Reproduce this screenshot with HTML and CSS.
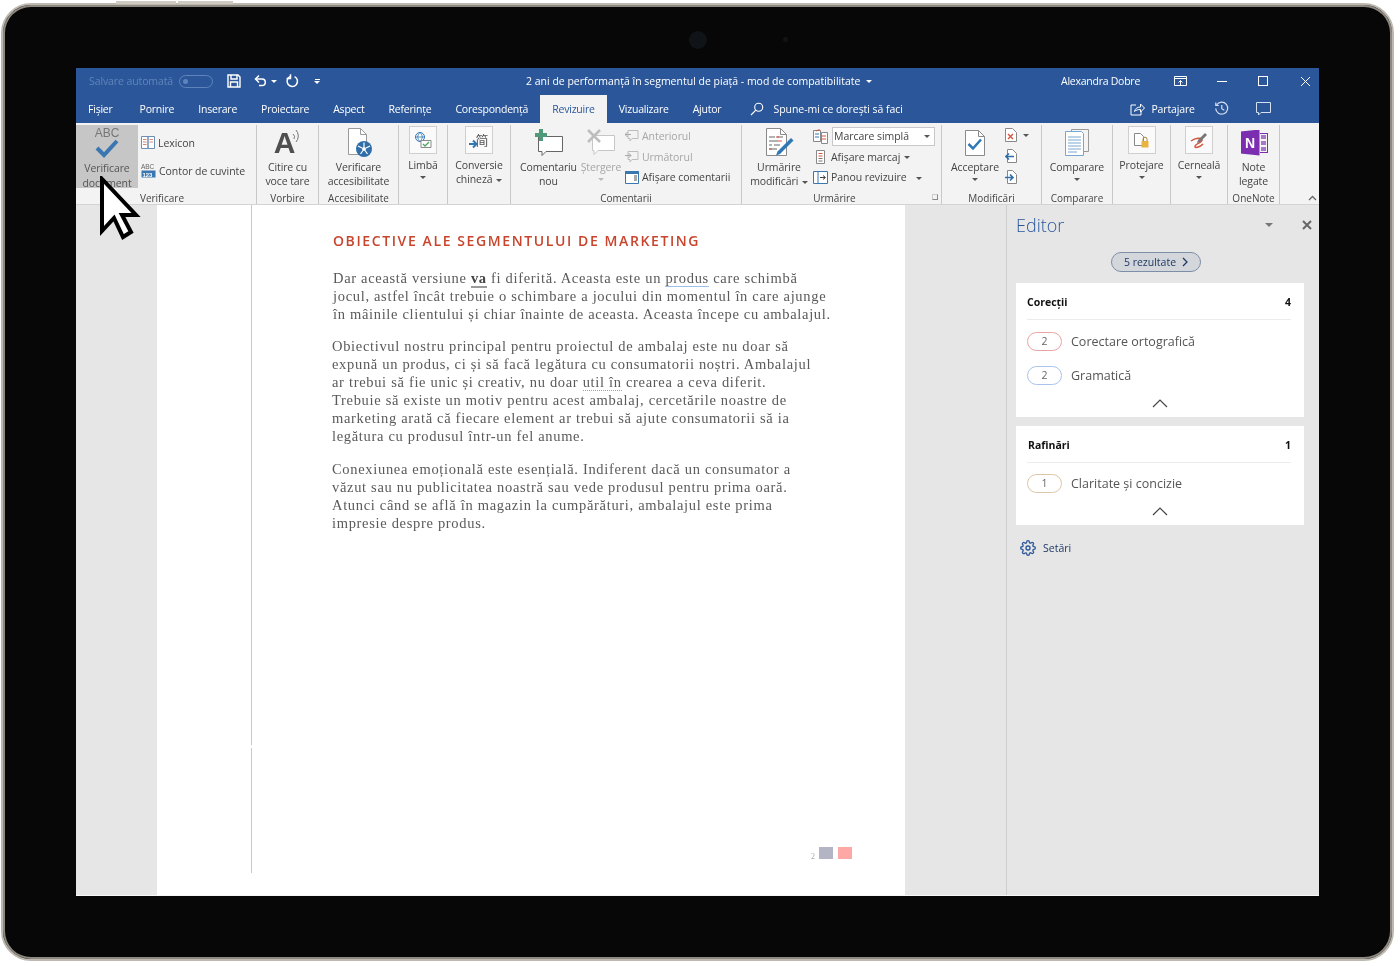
FILE: index.html
```html
<!DOCTYPE html>
<html lang="ro">
<head>
    <meta charset="UTF-8">
    <meta name="viewport" content="width=device-width, initial-scale=1.0">
    <title>Editor - Word</title>
    <link rel="stylesheet" href="styles.css">
</head>
<body>
<div class="device">
    <span class="hw-btn hw-btn-a"></span>
    <span class="hw-btn hw-btn-b"></span>
    <span class="camera"></span>
    <span class="sensor"></span>

    <div class="screen">
        <!-- title bar -->
        <div class="titlebar">
            <span class="autosave">Salvare automată</span>
            <span class="toggle"><i></i></span>
            <svg class="qa-save" width="14" height="14" viewBox="0 0 14 14" fill="none" stroke="#fff" stroke-width="1.4"><path d="M1 1h10l2 2v10H1z"/><path d="M4 1v4h6V1M3.5 13V8h7v5"/></svg>
            <svg class="qa-undo" width="14" height="14" viewBox="0 0 14 14" fill="none" stroke="#fff" stroke-width="1.5"><path d="M1.5 5H8a3.3 3.3 0 0 1 0 6.6H5"/><path d="M5 1.5 1.5 5 5 8.5"/></svg>
            <span class="caret caret-white qa-undo-caret"></span>
            <svg class="qa-redo" width="14" height="14" viewBox="0 0 14 14" fill="none" stroke="#fff" stroke-width="1.5"><path d="M9.6 2.6a5.2 5.2 0 1 1-4.2-.2"/><path d="M5.5 .2v4.2H1.6"/></svg>
            <span class="qa-more"><i></i><span class="caret caret-white"></span></span>
            <span class="doc-title">2 ani de performanță în segmentul de piață - mod de compatibilitate</span>
            <span class="caret caret-white title-caret"></span>
            <span class="user">Alexandra Dobre</span>
            <svg class="win-display" width="13" height="11" viewBox="0 0 13 11" fill="none" stroke="#fff"><path d="M.5.5h12v9H.5zM.5 2.5h12"/><path d="M6.5 9V4.5M4.5 6.5l2-2 2 2"/></svg>
            <span class="win-min"></span>
            <span class="win-max"></span>
            <svg class="win-close" width="11" height="11" viewBox="0 0 11 11" stroke="#fff"><path d="M1 1l9 9M10 1l-9 9"/></svg>
        </div>

        <!-- tabs -->
        <div class="tabs">
            <span class="tab tab-first">Fișier</span>
            <span class="tab">Pornire</span>
            <span class="tab">Inserare</span>
            <span class="tab">Proiectare</span>
            <span class="tab">Aspect</span>
            <span class="tab">Referințe</span>
            <span class="tab">Corespondență</span>
            <span class="tab tab-active">Revizuire</span>
            <span class="tab">Vizualizare</span>
            <span class="tab">Ajutor</span>
            <svg class="tell-icon" width="14" height="14" viewBox="0 0 14 14" fill="none" stroke="#fff" stroke-width="1.1"><circle cx="8.7" cy="5.3" r="4"/><path d="M5.8 8.2 1 13"/></svg>
            <span class="tell">Spune-mi ce dorești să faci</span>
            <svg class="share-icon" width="15" height="14" viewBox="0 0 15 14" fill="none" stroke="#fff"><path d="M6 3H1v10h10V9"/><path d="M4.5 9.5C5 6.5 7.5 5 10.5 5V2L14.5 6l-4 4V7.5C8 7.5 6 8 4.5 9.5z"/></svg>
            <span class="share">Partajare</span>
            <svg class="history-icon" width="15" height="15" viewBox="0 0 15 15" fill="none" stroke="#d5e0f0" stroke-width="1.2"><path d="M2.6 4a6 6 0 1 1-.9 3.5"/><path d="M1.8 1.5v3h3M7.8 4v3.700l2.500 1.500"/></svg>
            <svg class="comment-icon" width="15" height="14" viewBox="0 0 15 14" fill="none" stroke="#d5e0f0"><path d="M.5.5h14v10H5L2.500 13v-2.500h-2z"/></svg>
        </div>

        <!-- ribbon -->
        <div class="ribbon">
            <section class="group g-proof">
                <div class="group-body">
                    <div class="big big-active">
                        <span class="abc">ABC</span>
                        <svg class="abc-check" width="24" height="19" viewBox="0 0 24 19" fill="none" stroke="#3a76b0" stroke-width="4"><path d="M2 9l7 7L22 2"/></svg>
                        <span class="big-text">Verificare<br>document</span>
                    </div>
                    <div class="stack stack-proof">
                        <div class="line">
                            <svg width="14" height="13" viewBox="0 0 14 13" fill="#fff" stroke="#6d8fb5"><path d="M.5.5H7v12H.5zM7 .5h6.500v12H7z"/><path d="M2 3.500h3.500M2 6h3.500M2 8.500h3.500M8.500 3.500H12M8.500 6H12" stroke="#d08a7a"/></svg>
                            <span>Lexicon</span>
                        </div>
                        <div class="line">
                            <svg width="15" height="15" viewBox="0 0 15 15"><text x="0" y="6" class="tiny-abc">ABC</text><rect x=".5" y="7.5" width="14" height="7" fill="#3a76b0"/><text x="1.5" y="13.5" class="tiny-num">123</text></svg>
                            <span>Contor de cuvinte</span>
                        </div>
                    </div>
                </div>
                <div class="group-label label-proof">Verificare</div>
            </section>

            <section class="group g-speech">
                <div class="group-body center">
                    <div class="big">
                        <span class="big-icon icon-a">
                            <span class="big-a">A</span>
                            <svg width="9" height="18" viewBox="0 0 9 18" fill="none" stroke="#777"><path d="M1 6a4 4 0 0 1 1 5M4 2a9 9 0 0 1 0 12"/></svg>
                        </span>
                        <span class="big-text">Citire cu<br>voce tare</span>
                    </div>
                </div>
                <div class="group-label">Vorbire</div>
            </section>

            <section class="group g-access">
                <div class="group-body center">
                    <div class="big">
                        <span class="big-icon icon-access">
                            <svg width="26" height="31" viewBox="0 0 26 31"><path d="M1.5 1.5h12l6 6v20h-18z" fill="#fff" stroke="#9a9a9a"/><path d="M13.5 1.5v6h6" fill="none" stroke="#9a9a9a"/><circle cx="17" cy="22" r="8" fill="#2f6ea8"/><circle cx="17" cy="22" r="2" fill="#fff"/><path d="M17 15.500V20M11 19l4 2M23 19l-4 2M13.500 27l2.500-3.500M20.500 27 18 23.500" stroke="#fff" stroke-width="1.2"/></svg>
                        </span>
                        <span class="big-text">Verificare<br>accesibilitate</span>
                    </div>
                </div>
                <div class="group-label">Accesibilitate</div>
            </section>

            <section class="group g-lang">
                <div class="group-body center">
                    <div class="big">
                        <span class="boxed">
                            <svg width="18" height="16" viewBox="0 0 18 16"><circle cx="6" cy="5" r="4.5" fill="none" stroke="#2f78b5"/><path d="M1.5 5h9M6 .5c-3 3-3 6 0 9M6 .5c3 3 3 6 0 9" fill="none" stroke="#2f78b5" stroke-width=".8"/><path d="M7 8.5h10v7H7z" fill="#fff" stroke="#8a8a8a"/><path d="M9 12l2 2 4-4" fill="none" stroke="#4aa564" stroke-width="1.3"/></svg>
                        </span>
                        <span class="big-text">Limbă</span>
                        <span class="caret"></span>
                    </div>
                </div>
            </section>

            <section class="group g-chinese">
                <div class="group-body center">
                    <div class="big">
                        <span class="boxed boxed-ch">
                            <svg width="9" height="10" viewBox="0 0 9 10" fill="none" stroke="#2f78b5" stroke-width="2" class="ch-arrow"><path d="M0 5h7M4 1.5 7.500 5 4 8.500"/></svg>
                            <span class="ch-glyph">简</span>
                        </span>
                        <span class="big-text">Conversie<br>chineză <span class="caret caret-inline"></span></span>
                    </div>
                </div>
            </section>

            <section class="group g-comments">
                <div class="group-body">
                    <div class="big big-new">
                        <span class="big-icon">
                            <svg width="30" height="28" viewBox="0 0 30 28"><path d="M4.5 7.5h24v15H12l-4 4v-4H4.500z" fill="#fff" stroke="#666"/><path d="M3 0h4v4h4v4H7v4H3V8h-4V4h4z" transform="translate(2 0)" fill="#4e9a7a"/></svg>
                        </span>
                        <span class="big-text">Comentariu<br>nou</span>
                    </div>
                    <div class="big big-del disabled">
                        <span class="big-icon">
                            <svg width="28" height="28" viewBox="0 0 28 28"><path d="M5.5 6.5h22v15H11l-4 4v-4H5.500z" fill="#fff" stroke="#c6c6c6"/><path d="M1 1l12 12M13 1 1 13" stroke="#bdbdbd" stroke-width="2.5"/></svg>
                        </span>
                        <span class="big-text">Ștergere</span>
                        <span class="caret caret-off"></span>
                    </div>
                    <div class="stack stack-comments">
                        <div class="line disabled">
                            <svg width="14" height="14" viewBox="0 0 14 14" fill="none" stroke="#bdbdbd"><path d="M3 1.5h10v8H7L5 12V9.500H3z"/><path d="M0 5.500h6M2.500 3 0 5.500 2.500 8" stroke="#a9a9a9"/></svg>
                            <span>Anteriorul</span>
                        </div>
                        <div class="line disabled">
                            <svg width="14" height="14" viewBox="0 0 14 14" fill="none" stroke="#bdbdbd"><path d="M3 1.5h10v8H7L5 12V9.500H3z"/><path d="M0 5.500h6M3.500 3 6 5.500 3.500 8" stroke="#a9a9a9"/></svg>
                            <span>Următorul</span>
                        </div>
                        <div class="line">
                            <svg width="14" height="13" viewBox="0 0 14 13"><path d="M.5.5h13v12H.5z" fill="#fff" stroke="#3a76b0"/><path d="M.5.5h13v2H.5z" fill="#3a76b0" stroke="#3a76b0"/><path d="M9 5h3M9 7h3M9 9h3" stroke="#555"/></svg>
                            <span>Afișare comentarii</span>
                        </div>
                    </div>
                </div>
                <div class="group-label">Comentarii</div>
            </section>

            <section class="group g-track">
                <div class="group-body">
                    <div class="big big-track">
                        <span class="big-icon">
                            <svg width="30" height="32" viewBox="0 0 30 32"><path d="M2.5 1.5h14l6 6v21h-20z" fill="#fff" stroke="#8a8a8a"/><path d="M16.5 1.5v6h6" fill="none" stroke="#8a8a8a"/><path d="M5 10h6M13 10h6M5 14h9M5 18h3M10 18h6M5 22h8" stroke="#666"/><path d="M12 10h3M14 14h4M5 22h3" stroke="#d2553f"/><path d="M27 11l2.5 2.500L16 27l-4 1.500 1.500-4z" fill="#2f78b5"/></svg>
                        </span>
                        <span class="big-text">Urmărire<br>modificări <span class="caret caret-inline"></span></span>
                    </div>
                    <div class="stack stack-track">
                        <div class="line line-select">
                            <svg width="15" height="15" viewBox="0 0 15 15" fill="#fff" stroke="#888"><path d="M.5 1.5h7v11h-7z"/><path d="M8.5 3.5h6v11h-6z"/><path d="M3 2 6.500.5M9 7h4M9 10h4" stroke="#d2553f"/><path d="M2 5h4M2 8h4" stroke="#2f78b5"/></svg>
                            <span class="select">Marcare simplă<span class="caret"></span></span>
                        </div>
                        <div class="line">
                            <svg width="15" height="14" viewBox="0 0 15 14" fill="#fff" stroke="#888"><path d="M3.5.5h8v13h-8z"/><path d="M5.5 3.500h4M5.500 6h4" stroke="#d2553f"/><path d="M5.5 8.500h4M5.500 11h4" stroke="#777"/></svg>
                            <span>Afișare marcaj <span class="caret caret-inline"></span></span>
                        </div>
                        <div class="line">
                            <svg width="15" height="13" viewBox="0 0 15 13"><path d="M.5.5h14v12H.5z" fill="#fff" stroke="#3a76b0"/><path d="M5 .5v12" stroke="#3a76b0"/><path d="M7 6.500h5M10 4.500l2.500 2-2.500 2" fill="none" stroke="#444"/></svg>
                            <span>Panou revizuire <span class="caret caret-inline caret-gap"></span></span>
                        </div>
                    </div>
                </div>
                <div class="group-label label-track">Urmărire<span class="launcher"></span></div>
            </section>

            <section class="group g-changes">
                <div class="group-body">
                    <div class="big big-accept">
                        <span class="big-icon">
                            <svg width="22" height="28" viewBox="0 0 22 28"><path d="M1.5 1.5h13l6 6v19h-19z" fill="#fff" stroke="#8a8a8a"/><path d="M14.5 1.5v6h6" fill="none" stroke="#8a8a8a"/><path d="M4.5 15l4.500 4.500 8-9" fill="none" stroke="#2f78b5" stroke-width="2.5"/></svg>
                        </span>
                        <span class="big-text">Acceptare</span>
                        <span class="caret"></span>
                    </div>
                    <div class="mini-stack">
                        <div class="mini-row">
                            <svg width="12" height="14" viewBox="0 0 12 14"><path d="M.5.5h7l4 4v9H.5z" fill="#fff" stroke="#888"/><path d="M3 6l5 5M8 6l-5 5" stroke="#d2553f" stroke-width="1.4"/></svg>
                            <span class="caret mini-caret"></span>
                        </div>
                        <svg width="12" height="14" viewBox="0 0 12 14"><path d="M2.5.5h5l4 4v9h-9z" fill="#fff" stroke="#888"/><path d="M9 7.500H1M4 4.500l-3 3 3 3" fill="none" stroke="#2f6ea8" stroke-width="1.6"/></svg>
                        <svg width="12" height="14" viewBox="0 0 12 14"><path d="M2.5.5h5l4 4v9h-9z" fill="#fff" stroke="#888"/><path d="M0 7.500h8M5 4.500l3 3-3 3" fill="none" stroke="#2f6ea8" stroke-width="1.6"/></svg>
                    </div>
                </div>
                <div class="group-label">Modificări</div>
            </section>

            <section class="group g-compare">
                <div class="group-body center">
                    <div class="big">
                        <span class="big-icon">
                            <svg width="24" height="27" viewBox="0 0 24 27"><path d="M6.5.5h17v22h-17z" fill="#f4f4f4" stroke="#999"/><path d="M.5 2.500h16l2 2v22H.5z" fill="#fff" stroke="#7ba6d0"/><path d="M3 8h13M3 11h13M3 14h13M3 17h13M3 20h13M3 23h9" stroke="#7ba6d0"/></svg>
                        </span>
                        <span class="big-text">Comparare</span>
                        <span class="caret"></span>
                    </div>
                </div>
                <div class="group-label">Comparare</div>
            </section>

            <section class="group g-protect">
                <div class="group-body center">
                    <div class="big">
                        <span class="boxed">
                            <svg width="15" height="15" viewBox="0 0 15 15"><path d="M.5.5h6l3 3v9h-9z" fill="#fff" stroke="#888"/><rect x="7.5" y="8" width="7" height="6.500" fill="#e8b341"/><path d="M9 8V6.200a2 2 0 0 1 4 0V8" fill="none" stroke="#a78a3f"/></svg>
                        </span>
                        <span class="big-text">Protejare</span>
                        <span class="caret"></span>
                    </div>
                </div>
            </section>

            <section class="group g-ink">
                <div class="group-body center">
                    <div class="big">
                        <span class="boxed">
                            <svg width="18" height="17" viewBox="0 0 18 17" fill="none"><path d="M1 9c4-3 11-4 11-1s-8 4-7 7c1 1 5 0 8-3" stroke="#d2553f" stroke-width="1.5"/><path d="M15 1l2 2-7 7-3 1 1-3z" fill="#777"/></svg>
                        </span>
                        <span class="big-text">Cerneală</span>
                        <span class="caret"></span>
                    </div>
                </div>
            </section>

            <section class="group g-onenote">
                <div class="group-body center">
                    <div class="big">
                        <span class="big-icon icon-onenote">
                            <span class="on-tile">N</span>
                            <span class="on-tabs"><i></i><i></i><i></i></span>
                        </span>
                        <span class="big-text">Note<br>legate</span>
                    </div>
                </div>
                <div class="group-label">OneNote</div>
            </section>

            <section class="g-collapse">
                <svg width="9" height="6" viewBox="0 0 9 6" fill="none" stroke="#666" stroke-width="1.3"><path d="M1 5l3.500-3.500L8 5"/></svg>
            </section>
        </div>

        <!-- document + pane -->
        <div class="workspace">
            <div class="gutter"></div>
            <div class="doc">
                <div class="sheet">
                    <h1 class="doc-heading">OBIECTIVE ALE SEGMENTULUI DE MARKETING</h1>
                    <p class="para para-first">Dar această versiune <b class="err-bold">va</b> fi diferită. Aceasta este un <span class="err-blue">produs</span> care schimbă<br>jocul, astfel încât trebuie o schimbare a jocului din momentul în care ajunge<br>în mâinile clientului și chiar înainte de aceasta. Aceasta începe cu ambalajul.</p>
                    <p class="para">Obiectivul nostru principal pentru proiectul de ambalaj este nu doar să<br>expună un produs, ci și să facă legătura cu consumatorii noștri. Ambalajul<br>ar trebui să fie unic și creativ, nu doar <span class="err-gold">util în</span> crearea a ceva diferit.<br>Trebuie să existe un motiv pentru acest ambalaj, cercetările noastre de<br>marketing arată că fiecare element ar trebui să ajute consumatorii să ia<br>legătura cu produsul într-un fel anume.</p>
                    <p class="para">Conexiunea emoțională este esențială. Indiferent dacă un consumator a<br>văzut sau nu publicitatea noastră sau vede produsul pentru prima oară.<br>Atunci când se află în magazin la cumpărături, ambalajul este prima<br>impresie despre produs.</p>
                    <div class="page-foot">
                        <span class="page-num">2</span>
                        <span class="sq sq-grey"></span>
                        <span class="sq sq-pink"></span>
                    </div>
                </div>
            </div>
            <div class="margin-right"></div>

            <aside class="pane">
                <div class="pane-head">
                    <span class="pane-title">Editor</span>
                    <span class="caret caret-pane"></span>
                    <svg class="pane-x" width="10" height="10" viewBox="0 0 10 10" stroke="#666" stroke-width="2"><path d="M1 1l8 8M9 1 1 9"/></svg>
                </div>
                <div class="pill-row">
                    <span class="results">5 rezultate
                        <svg width="6" height="10" viewBox="0 0 6 10" fill="none" stroke="#1f3864" stroke-width="1.3"><path d="M1 1l4 4-4 4"/></svg>
                    </span>
                </div>

                <div class="card card-fix">
                    <div class="card-head"><span>Corecții</span><span>4</span></div>
                    <div class="row"><span class="count count-red">2</span>Corectare ortografică</div>
                    <div class="row"><span class="count count-blue">2</span>Gramatică</div>
                    <div class="card-chev">
                        <svg width="16" height="9" viewBox="0 0 16 9" fill="none" stroke="#444" stroke-width="1.2"><path d="M1 8l7-7 7 7"/></svg>
                    </div>
                </div>

                <div class="card card-refine">
                    <div class="card-head"><span class="refine-name">Rafinări</span><span>1</span></div>
                    <div class="row"><span class="count count-tan">1</span>Claritate și concizie</div>
                    <div class="card-chev">
                        <svg width="16" height="9" viewBox="0 0 16 9" fill="none" stroke="#444" stroke-width="1.2"><path d="M1 8l7-7 7 7"/></svg>
                    </div>
                </div>

                <div class="settings">
                    <svg width="16" height="16" viewBox="0 0 24 24" fill="none" stroke="#2b579a" stroke-width="2"><path d="M12 15a3 3 0 1 0 0-6 3 3 0 0 0 0 6z"/><path d="M19.4 15a1.65 1.65 0 0 0 .33 1.82l.06.06a2 2 0 0 1-2.83 2.83l-.06-.06a1.65 1.65 0 0 0-1.82-.33 1.65 1.65 0 0 0-1 1.51V21a2 2 0 0 1-4 0v-.09A1.65 1.65 0 0 0 9 19.4a1.65 1.65 0 0 0-1.82.33l-.06.06a2 2 0 0 1-2.83-2.83l.06-.06a1.65 1.65 0 0 0 .33-1.82 1.65 1.65 0 0 0-1.51-1H3a2 2 0 0 1 0-4h.09A1.65 1.65 0 0 0 4.6 9a1.65 1.65 0 0 0-.33-1.82l-.06-.06a2 2 0 0 1 2.83-2.83l.06.06a1.65 1.65 0 0 0 1.82.33H9a1.65 1.65 0 0 0 1-1.51V3a2 2 0 0 1 4 0v.09a1.65 1.65 0 0 0 1 1.51 1.65 1.65 0 0 0 1.82-.33l.06-.06a2 2 0 0 1 2.83 2.83l-.06.06a1.65 1.65 0 0 0-.33 1.82V9a1.65 1.65 0 0 0 1.51 1H21a2 2 0 0 1 0 4h-.09a1.65 1.65 0 0 0-1.51 1z"/></svg>
                    <span>Setări</span>
                </div>
            </aside>
        </div>
    </div>
</div>

<!-- mouse pointer over the ribbon -->
<svg class="pointer" width="42" height="64" viewBox="0 0 42 64"><path d="M3 3v52l12-13 9 19 8-5-9-17h14z" fill="#fff" stroke="#000" stroke-width="4" stroke-linejoin="miter"/></svg>
</body>
</html>
```

FILE: styles.css
```css
* {
    box-sizing: border-box;
}
body {
    margin: 0;
    background: #fff;
    font-family: "Open Sans", "Noto Sans", sans-serif;
    font-size: 10.5px;
    color: #444;
    overflow: hidden;
    height: 966px;
    position: relative;
}

/* tablet frame */
.device {
    position: relative;
    width: 1393px;
    height: 958px;
    margin: 3px 0 0 1px;
    padding: 63px 0 0 73px;
    background: #070707;
    border: 2px solid #bdb9b0;
    border-radius: 30px;
    box-shadow: inset 0 0 0 2px #8d8880;
}
.hw-btn {
    position: absolute;
    top: -4px;
    height: 3px;
    background: #cfcbc2;
}
.hw-btn-a { left: 113px; width: 60px; }
.hw-btn-b { left: 175px; width: 55px; }
.camera {
    position: absolute;
    top: 26px;
    left: 686px;
    width: 18px;
    height: 18px;
    border-radius: 50%;
    background: #101418;
}
.sensor {
    position: absolute;
    top: 32px;
    left: 780px;
    width: 5px;
    height: 5px;
    border-radius: 50%;
    background: #131313;
}
.screen {
    width: 1243px;
    height: 828px;
    display: flex;
    flex-direction: column;
    background: #e6e6e6;
    filter: blur(.35px);
}

/* carets */
.caret {
    display: inline-block;
    width: 0;
    height: 0;
    border-left: 3px solid transparent;
    border-right: 3px solid transparent;
    border-top: 3px solid #555;
}
.caret-white { border-top-color: #fff; }
.caret-off { border-top-color: #bbb; }
.caret-inline {
    vertical-align: middle;
    margin-left: 1px;
}

/* title bar */
.titlebar {
    height: 27px;
    flex: none;
    display: flex;
    align-items: center;
    background: #2b579a;
    color: #fff;
    padding: 0 0 1px 13px;
}
.autosave {
    width: 90px;
    letter-spacing: -.1px;
    color: #5f84ba;
    white-space: nowrap;
}
.toggle {
    width: 34px;
    height: 13px;
    border: 1px solid #5f84ba;
    border-radius: 7px;
    display: flex;
    align-items: center;
    padding-left: 3px;
}
.toggle i {
    width: 5px;
    height: 5px;
    border-radius: 50%;
    background: #5f84ba;
}
.qa-save { margin-left: 14px; }
.qa-undo { margin-left: 13px; }
.qa-undo-caret { margin-left: 3px; }
.qa-redo { margin-left: 8px; }
.qa-more {
    margin-left: 15px;
    display: flex;
    flex-direction: column;
    align-items: center;
    gap: 1px;
    width: 6px;
}
.qa-more i {
    width: 5px;
    height: 1px;
    background: #fff;
}
.doc-title {
    margin-left: 206px;
    width: 335px;
    white-space: nowrap;
}
.title-caret { margin-left: 5px; }
.user {
    margin-left: 189px;
    width: 80px;
    white-space: nowrap;
    letter-spacing: -.25px;
}
.win-display { margin-left: 33px; }
.win-min {
    width: 10px;
    height: 1px;
    margin-left: 30px;
    background: #fff;
}
.win-max {
    width: 10px;
    height: 10px;
    margin-left: 31px;
    border: 1px solid #fff;
}
.win-close { margin-left: 32px; }

/* tabs */
.tabs {
    height: 28px;
    flex: none;
    display: flex;
    align-items: center;
    background: #2b579a;
    color: #fff;
}
.tab {
    height: 100%;
    display: flex;
    align-items: center;
    padding: 0 12px 1px;
    white-space: nowrap;
    letter-spacing: -.22px;
}
.tab-first { padding-right: 15px; }
.tab-active {
    background: #f3f3f3;
    color: #2b579a;
}
.tell-icon { margin: 0 0 1px 17px; }
.tell {
    margin: 0 0 1px 9px;
    width: 357px;
    white-space: nowrap;
    letter-spacing: -.05px;
}
.share-icon { margin-bottom: 1px; }
.share { margin: 0 0 1px 6px; letter-spacing: -.15px; }
.history-icon { margin: 0 0 1px 19px; }
.comment-icon { margin: 0 0 1px 27px; }

/* ribbon */
.ribbon {
    height: 82px;
    flex: none;
    display: flex;
    background: #f3f3f3;
    border-bottom: 1px solid #d4d4d4;
    padding-top: 2px;
}
.group {
    display: flex;
    flex-direction: column;
    position: relative;
    border-right: 1px solid #c8c8c8;
}
.g-proof { width: 181px; }
.g-speech { width: 62px; }
.g-access { width: 80px; }
.g-lang { width: 49px; }
.g-chinese { width: 63px; }
.g-comments { width: 231px; }
.g-track { width: 200px; }
.g-changes { width: 100px; }
.g-compare { width: 71px; }
.g-protect { width: 58px; }
.g-ink { width: 57px; }
.g-onenote { width: 52px; }
.g-collapse {
    flex: 1;
    display: flex;
    align-items: flex-end;
    justify-content: flex-end;
    padding: 0 2px 3px 0;
}
.group-body {
    flex: 1;
    min-height: 0;
    display: flex;
}
.group-body.center { justify-content: center; }
.group-label {
    height: 13px;
    line-height: 15px;
    text-align: center;
    font-size: 10px;
    color: #444;
    white-space: nowrap;
    position: relative;
}
.label-proof { padding-right: 8px; }
.label-track { padding-right: 14px; }
.big {
    display: flex;
    flex-direction: column;
    align-items: center;
    text-align: center;
    white-space: nowrap;
}
.big-text {
    line-height: 14px;
    letter-spacing: -.1px;
}
.big-icon {
    height: 35px;
    display: flex;
    align-items: center;
    justify-content: center;
}
.big .caret { margin-top: 4px; }
.big .caret-inline { margin-top: 0; }
.big-active {
    width: 62px;
    height: 63px;
    padding-top: 1px;
    background: #c6c6c6;
    color: #555;
}
.big-active .big-text { margin-top: 3px; line-height: 15px; }
.abc {
    font-family: "Liberation Sans", sans-serif;
    font-size: 12px;
    line-height: 15px;
    color: #777;
}
.abc-check { margin-top: -2px; flex: none; }
.stack {
    display: flex;
    flex-direction: column;
}
.line {
    display: flex;
    align-items: center;
    gap: 3px;
    white-space: nowrap;
    letter-spacing: -.05px;
}
.line svg { flex: none; }
.stack-proof {
    margin-left: 3px;
    padding-top: 9px;
    gap: 11px;
}
.stack-proof .line { height: 17px; }
.tiny-abc {
    font-family: "Liberation Sans", sans-serif;
    font-size: 6.5px;
    fill: #666;
}
.tiny-num {
    font-family: "Liberation Sans", sans-serif;
    font-size: 6px;
    font-weight: bold;
    fill: #fff;
}
.icon-a { position: relative; align-items: flex-start; }
.big-a {
    font-family: "Liberation Sans", sans-serif;
    font-size: 30px;
    font-weight: bold;
    line-height: 34px;
    color: #4f4f4f;
    margin-top: 1px;
}
.icon-a svg { margin-top: 3px; margin-left: -3px; }
.icon-access { padding-left: 4px; }
.boxed {
    width: 28px;
    height: 28px;
    margin: 1px 0 4px;
    background: #fafafa;
    border: 1px solid #cfcfcf;
    display: flex;
    align-items: center;
    justify-content: center;
}
.boxed-ch { position: relative; }
.ch-glyph {
    font-family: "Noto Sans CJK SC", sans-serif;
    font-size: 13px;
    line-height: 14px;
    color: #555;
}
.ch-arrow { margin-top: 8px; margin-right: -3px; }
.disabled { color: #a6a6a6; }
.big-new { margin-left: 9px; width: 57px; }
.big-del { margin-left: 4px; width: 40px; }
.stack-comments {
    margin-left: 4px;
    padding-top: 1px;
}
.stack-comments .line { height: 20.5px; }
.big-track { margin-left: 9px; width: 56px; }
.big-track .big-icon svg { margin-top: 1px; }
.stack-track {
    margin-left: 6px;
    padding-top: 1px;
}
.stack-track .line { height: 20.5px; }
.line-select { gap: 4px; }
.select {
    width: 103px;
    height: 19px;
    display: flex;
    align-items: center;
    justify-content: space-between;
    padding: 0 4px 0 1px;
    background: #fff;
    border: 1px solid #c8c8c8;
}
.caret-gap { margin-left: 7px; }
.launcher {
    position: absolute;
    right: 3px;
    top: 3px;
    width: 6px;
    height: 6px;
    border: 1px solid #888;
    border-left-color: #ccc;
    border-top-color: #ccc;
}
.big-accept { margin-left: 8px; width: 50px; }
.mini-stack {
    margin-left: 5px;
    padding-top: 3px;
    display: flex;
    flex-direction: column;
    gap: 7px;
}
.mini-row {
    display: flex;
    align-items: center;
    width: 24px;
    height: 14px;
    gap: 6px;
}
.icon-onenote { padding-left: 1px; }
.on-tile {
    width: 19px;
    height: 26px;
    background: #7b2fb0;
    color: #fff;
    font-family: "Liberation Sans", sans-serif;
    font-weight: bold;
    font-size: 14px;
    line-height: 26px;
    text-align: center;
    clip-path: polygon(0 8%, 100% 0, 100% 100%, 0 92%);
}
.on-tabs {
    width: 8px;
    height: 20px;
    display: flex;
    flex-direction: column;
    gap: 2px;
    border: 1px solid #7b2fb0;
    border-left: 0;
    padding: 1px;
}
.on-tabs i {
    height: 4px;
    background: #a877cc;
}

/* workspace */
.workspace {
    flex: 1;
    min-height: 0;
    display: flex;
    border-bottom: 1px solid #f7f7f7;
}
.gutter {
    width: 81px;
    background: #e6e6e6;
}
.doc {
    width: 748px;
    background: #fff;
    padding: 0 0 22px 94px;
    display: flex;
}
.sheet {
    width: 100%;
    display: flex;
    flex-direction: column;
    padding-left: 82px;
    background: linear-gradient(#c9c9c9 0 540px, transparent 540px 543px, #c9c9c9 543px) left top / 1px 100% no-repeat;
}
.doc-heading {
    margin: 27px 0 19px;
    font-size: 14px;
    line-height: 18px;
    font-weight: 600;
    letter-spacing: 1.6px;
    color: #c8452d;
    white-space: nowrap;
}
.para {
    margin: 0 0 15px -1px;
    font-family: "Liberation Serif", serif;
    font-size: 14.5px;
    line-height: 18px;
    letter-spacing: .68px;
    color: #5a5a5a;
    white-space: nowrap;
}
.para-first { margin: 0 0 14px; }
.err-bold {
    border-bottom: 2px solid #9a9a9a;
    color: #444;
}
.err-blue {
    border-bottom: 1.5px solid #9cc0e8;
}
.err-gold {
    border-bottom: 1px dotted #c9a227;
}
.page-foot {
    margin-top: auto;
    margin-bottom: 14px;
    margin-right: 53px;
    display: flex;
    justify-content: flex-end;
    align-items: flex-end;
    gap: 5px;
}
.page-num {
    font-family: "Liberation Serif", serif;
    font-size: 8px;
    line-height: 8px;
    color: #aaa;
    margin-right: -1px;
    margin-bottom: -2px;
}
.sq {
    width: 14px;
    height: 12px;
}
.sq-grey { background: #b3b5c5; }
.sq-pink { background: #fda8a4; }
.margin-right {
    width: 101px;
    background: #e6e6e6;
}

/* editor pane */
.pane {
    flex: 1;
    border-left: 1px solid #cfcfcf;
    background: #e6e6e6;
    padding: 0 15px 0 9px;
}
.pane-head {
    height: 42px;
    display: flex;
    align-items: center;
    padding-bottom: 2px;
}
.pane-title {
    font-size: 18px;
    font-weight: 300;
    color: #2b579a;
    flex: 1;
}
.caret-pane {
    border-left-width: 4px;
    border-right-width: 4px;
    border-top-width: 4px;
    border-top-color: #777;
    margin-right: 29px;
}
.pane-x { margin-right: -8px; }
.pill-row {
    display: flex;
    justify-content: center;
    padding: 5px 8px 0 0;
    height: 36px;
}
.results {
    width: 90px;
    height: 20px;
    display: flex;
    align-items: center;
    justify-content: center;
    gap: 6px;
    border: 1.5px solid #7f8ea8;
    border-radius: 10px;
    background: #d3d6db;
    color: #1f3864;
}
.card {
    background: #fff;
    padding: 0 13px 0 11px;
    margin-bottom: 9px;
}
.card-fix { height: 134px; }
.card-refine { height: 99px; }
.card-head {
    height: 37px;
    display: flex;
    align-items: center;
    justify-content: space-between;
    padding-top: 2px;
    font-weight: 700;
    color: #111;
    border-bottom: 1px solid #ececec;
    margin-bottom: 4px;
}
.refine-name { margin-left: 1px; }
.row {
    height: 34px;
    display: flex;
    align-items: center;
    gap: 9px;
    font-size: 12.5px;
    color: #555;
}
.card-refine .row { margin-top: -1px; }
.count {
    width: 35px;
    height: 19px;
    border: 1.5px solid #ccc;
    border-radius: 10px;
    display: flex;
    align-items: center;
    justify-content: center;
    font-size: 10.5px;
    color: #666;
}
.count-red { border-color: #eda3a3; }
.count-blue { border-color: #a9c3ee; }
.count-tan { border-color: #dcc6a8; }
.card-chev {
    display: flex;
    justify-content: center;
    padding: 7px 0 0 2px;
}
.card-chev svg { display: block; }
.settings {
    display: flex;
    align-items: center;
    gap: 7px;
    padding: 6px 0 0 4px;
    color: #1f3864;
}

/* pointer sits above the whole device */
.pointer {
    position: absolute;
    left: 99px;
    top: 176px;
}
```
